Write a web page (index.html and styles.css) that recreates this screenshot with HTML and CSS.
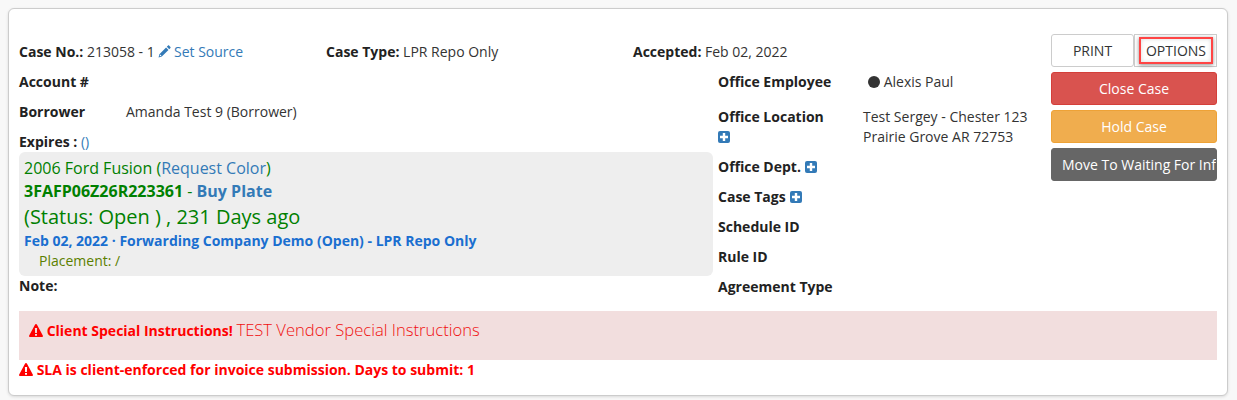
FILE: index.html
```
<!DOCTYPE html>
<html lang="en">
<head>
<meta charset="utf-8">
<title>Case 213058</title>
<link rel="stylesheet" href="styles.css">
</head>
<body>
<main class="card">
  <div class="top">
    <div class="info">
      <div class="heads">
        <div class="head"><b>Case No.:</b> 213058 - 1 <a class="link" href="#"><svg class="pencil" viewBox="0 0 14 14"><path d="M10.800.6c.3-.3.8-.3 1.100 0l1.500 1.500c.3.3.3.8 0 1.100l-1.300 1.300-2.600-2.600zM8.700 2.700l2.600 2.600-7.200 7.200L.6 13.400l.9-3.500zM2.300 10.200l-.5 2 2-.5z" fill-rule="evenodd"/></svg> Set Source</a></div>
        <div class="head"><b>Case Type:</b> LPR Repo Only</div>
        <div class="head"><b>Accepted:</b> Feb 02, 2022</div>
      </div>
      <div class="columns">
        <div class="left">
          <div class="row"><b>Account #</b></div>
          <div class="row"><b class="label-left">Borrower</b><span>Amanda Test 9 (Borrower)</span></div>
          <div class="row expires"><b>Expires :</b> <a class="link thin" href="#">()</a></div>
          <div class="vehicle">
            <div class="v-title">2006 Ford Fusion (<a class="link" href="#">Request Color</a>)</div>
            <div class="v-title"><b>3FAFP06Z26R223361</b> - <a class="link" href="#"><b>Buy Plate</b></a></div>
            <div class="v-status">(Status: Open ) , 231 Days ago</div>
            <div class="v-case">Feb 02, 2022 · Forwarding Company Demo (Open) - LPR Repo Only</div>
            <div class="v-place">Placement: /</div>
          </div>
          <div class="note"><b>Note:</b></div>
        </div>
        <div class="mid">
          <div class="row"><b class="label-mid">Office Employee</b><span class="employee"><i class="dot"></i> Alexis Paul</span></div>
          <div class="row location">
            <div class="label-mid"><b>Office Location</b><br><svg class="plus" viewBox="0 0 12 12"><rect width="12" height="12" rx="2"/><path d="M4.800 2h2.400v2.800H10v2.400H7.200V10H4.800V7.200H2V4.800h2.800z" fill="#fff"/></svg></div>
            <div>Test Sergey - Chester 123<br>Prairie Grove AR 72753</div>
          </div>
          <div class="row"><b>Office Dept.</b> <svg class="plus" viewBox="0 0 12 12"><rect width="12" height="12" rx="2"/><path d="M4.800 2h2.400v2.800H10v2.400H7.200V10H4.800V7.200H2V4.800h2.800z" fill="#fff"/></svg></div>
          <div class="row"><b>Case Tags</b> <svg class="plus" viewBox="0 0 12 12"><rect width="12" height="12" rx="2"/><path d="M4.800 2h2.400v2.800H10v2.400H7.200V10H4.800V7.200H2V4.800h2.800z" fill="#fff"/></svg></div>
          <div class="row"><b>Schedule ID</b></div>
          <div class="row"><b>Rule ID</b></div>
          <div class="row"><b>Agreement Type</b></div>
        </div>
      </div>
    </div>
    <aside class="actions">
      <div class="btn-pair">
        <a class="btn btn-light" href="#">PRINT</a>
        <a class="btn btn-light btn-focus" href="#"><span class="focus-ring">OPTIONS</span></a>
      </div>
      <a class="btn btn-red" href="#">Close Case</a>
      <a class="btn btn-amber" href="#">Hold Case</a>
      <a class="btn btn-grey" href="#">Move To Waiting For Info</a>
    </aside>
  </div>
  <div class="alert"><svg class="warn" viewBox="0 0 14 13"><path fill-rule="evenodd" d="M7 0c.4 0 .7.2.9.5l5.900 10.900c.4.7-.1 1.600-.9 1.600H1.100c-.8 0-1.300-.9-.9-1.600L6.100.5C6.300.2 6.600 0 7 0zM5.900 4l.2 5h1.800l.2-5zM6 10v1.700h2V10z"/></svg> <b>Client Special Instructions!</b> <span class="alert-text">TEST Vendor Special Instructions</span></div>
  <div class="sla"><svg class="warn" viewBox="0 0 14 13"><path fill-rule="evenodd" d="M7 0c.4 0 .7.2.9.5l5.900 10.900c.4.7-.1 1.600-.9 1.600H1.100c-.8 0-1.300-.9-.9-1.600L6.100.5C6.300.2 6.600 0 7 0zM5.900 4l.2 5h1.800l.2-5zM6 10v1.700h2V10z"/></svg> <b>SLA is client-enforced for invoice submission. Days to submit: 1</b></div>
</main>
</body>
</html>
```

FILE: styles.css
```
* { box-sizing: border-box; }
html, body { height: 100%; }
body {
  margin: 0;
  padding: 8px 9px 4px 8px;
  background: #f8f8f8;
  color: #333;
  font: 14px/20px "Open Sans", sans-serif;
  overflow: hidden;
}
a { text-decoration: none; }
b { font-weight: 700; color: #222; }
.card {
  height: 388px;
  padding: 25px 10px 0 10px;
  background: #fff;
  border: 1px solid #ccc;
  border-radius: 6px;
  box-shadow: 0 1px 3px rgba(0,0,0,.12);
}
.top { display: flex; height: 268px; }
.info { width: 1032px; padding-top: 8px; }
.heads { display: grid; grid-template-columns: repeat(3, 307px); height: 25px; }
.columns { display: flex; gap: 5px; }
.left { width: 694px; }
.mid { flex: 1; }
.row { display: flex; align-items: center; gap: 4px; padding: 5px 0; }
.row.expires { padding-bottom: 0; display: block; }
.row.location { align-items: flex-start; padding-top: 10px; gap: 0; }
.label-left { width: 103px; flex: none; }
.label-mid { width: 145px; flex: none; }
.employee { margin-left: 1px; }
.dot { display: inline-block; width: 12px; height: 12px; margin-right: 0; border-radius: 50%; background: #333; vertical-align: -1px; }
.link { color: #337ab7; }
.link.thin { font-weight: 400; }
.pencil { width: 13px; height: 13px; margin-right: -1px; fill: #337ab7; vertical-align: -1px; }
.plus { display: block; width: 12px; height: 12px; fill: #337ab7; }
.location .plus { display: inline-block; vertical-align: -1px; }
.vehicle {
  height: 124px;
  padding: 5px 5px 4px;
  background: #eee;
  border-radius: 6px;
  color: green;
}
.v-title { font-size: 16px; line-height: 23px; }
.v-title b { color: green; }
.v-title .link b { color: #337ab7; }
.v-status { font-size: 20px; line-height: 27px; }
.v-case { font-weight: 700; line-height: 20px; color: #1a6fd0; margin-top: 1px; }
.v-place { padding-left: 15px; color: #5c7f00; }
.note { height: 20px; }
.actions { display: flex; flex: 1; flex-direction: column; gap: 5px; width: 166px; min-width: 0; overflow: hidden; }
.btn-pair { display: flex; }
.btn {
  display: block;
  height: 33px;
  padding: 6px 10px;
  border: 1px solid transparent;
  border-radius: 3px;
  text-align: center;
  white-space: nowrap;
  overflow: hidden;
  color: #fff;
  flex: none;
}
.btn-light { width: 83px; background: #fff; border-color: #ccc; color: #333; }
.btn-focus { padding: 2px 3px 2px 4px; border-radius: 0; overflow: visible; }
.focus-ring { display: block; height: 27px; line-height: 23px; border: 2px solid #f44; box-shadow: 0 1px 4px rgba(0,0,0,.45), inset 0 0 4px rgba(0,0,0,.15); }
.btn-red { background: #d9534f; border-color: #d43f3a; }
.btn-amber { background: #f0ad4e; border-color: #eea236; }
.btn-grey { background: #666; border-color: #666; text-align: left; }
.alert {
  height: 49px;
  margin-top: 9px;
  padding: 9px 10px;
  background: #f2dede;
  color: red;
}
.alert b, .sla b { color: red; }
.alert-text { font-size: 16.6px; font-weight: 300; color: #f01010; }
.warn { width: 14px; height: 13px; fill: red; vertical-align: -1px; }
.sla { color: red; }
```
